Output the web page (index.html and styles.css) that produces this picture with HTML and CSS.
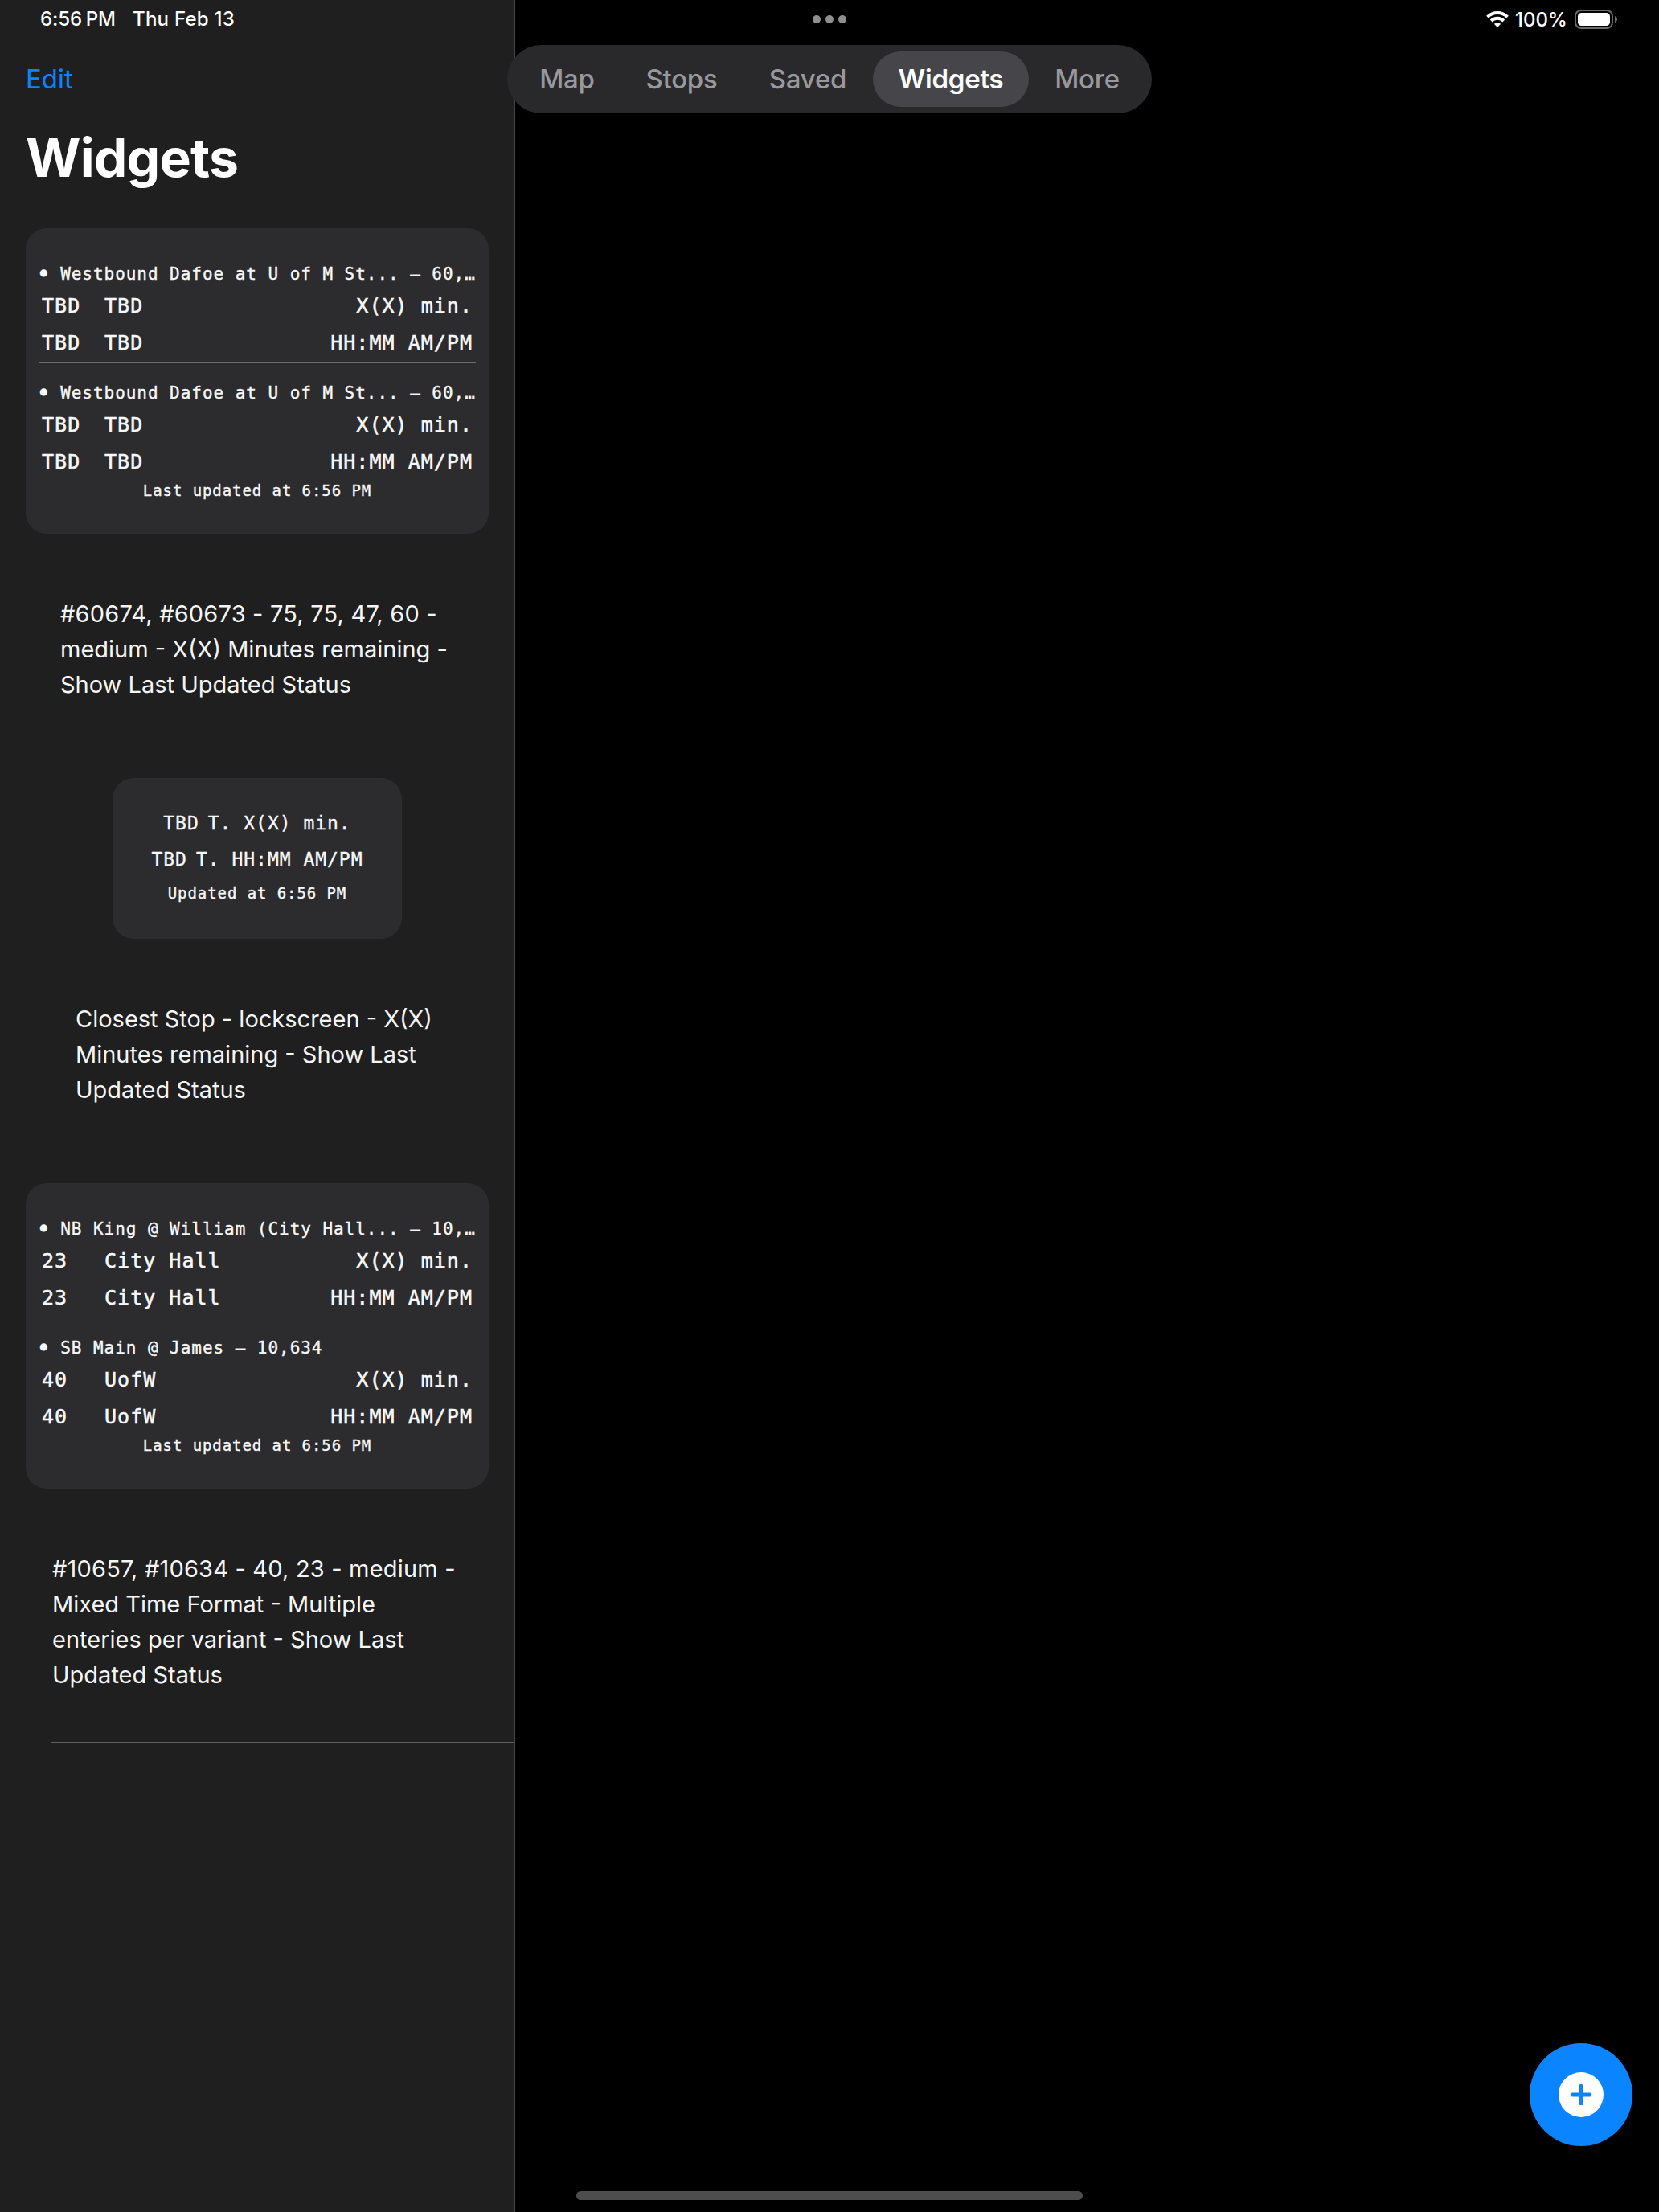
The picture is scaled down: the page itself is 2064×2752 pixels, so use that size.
FILE: index.html
```html
<!DOCTYPE html>
<html lang="en">
<head>
<meta charset="utf-8">
<title>Widgets</title>
<link rel="stylesheet" href="styles.css">
</head>
<body>
<div class="app">
  <aside class="sidebar">
    <div class="clock"><span class="time">6:56 PM</span><span class="date">Thu Feb 13</span></div>
    <div class="toolbar"><a class="edit">Edit</a></div>
    <h1 class="title">Widgets</h1>
    <ul class="list">
      <li class="item inset-a">
        <div class="card">
          <div class="stop"><b>•</b> Westbound Dafoe at U of M St... – 60,…</div>
          <div class="row"><span class="route">TBD</span><span class="dest">TBD</span><span class="eta">X(X) min.</span></div>
          <div class="row"><span class="route">TBD</span><span class="dest">TBD</span><span class="eta">HH:MM AM/PM</span></div>
          <div class="rule"></div>
          <div class="stop"><b>•</b> Westbound Dafoe at U of M St... – 60,…</div>
          <div class="row"><span class="route">TBD</span><span class="dest">TBD</span><span class="eta">X(X) min.</span></div>
          <div class="row"><span class="route">TBD</span><span class="dest">TBD</span><span class="eta">HH:MM AM/PM</span></div>
          <div class="updated">Last updated at 6:56 PM</div>
        </div>
        <p class="desc"><span class="ids">#60674, #60673 - 75, 75, 47, 60 -</span><br>medium - X(X) Minutes remaining -<br>Show Last Updated Status</p>
      </li>
      <li class="item inset-b">
        <div class="card small">
          <div class="line">TBD<span class="gap"></span>T. X(X) min.</div>
          <div class="line">TBD<span class="gap"></span>T. HH:MM AM/PM</div>
          <div class="updated">Updated at 6:56 PM</div>
        </div>
        <p class="desc">Closest Stop - lockscreen - X(X)<br>Minutes remaining - Show Last<br>Updated Status</p>
      </li>
      <li class="item inset-c">
        <div class="card">
          <div class="stop"><b>•</b> NB King @ William (City Hall... – 10,…</div>
          <div class="row"><span class="route">23</span><span class="dest">City Hall</span><span class="eta">X(X) min.</span></div>
          <div class="row"><span class="route">23</span><span class="dest">City Hall</span><span class="eta">HH:MM AM/PM</span></div>
          <div class="rule"></div>
          <div class="stop"><b>•</b> SB Main @ James – 10,634</div>
          <div class="row"><span class="route">40</span><span class="dest">UofW</span><span class="eta">X(X) min.</span></div>
          <div class="row"><span class="route">40</span><span class="dest">UofW</span><span class="eta">HH:MM AM/PM</span></div>
          <div class="updated">Last updated at 6:56 PM</div>
        </div>
        <p class="desc"><span class="ids">#10657, #10634 - 40, 23 - medium -</span><br>Mixed Time Format - Multiple<br>enteries per variant - Show Last<br>Updated Status</p>
      </li>
    </ul>
  </aside>
  <main class="detail">
    <div class="system">
      <svg class="wifi" width="28" height="20" viewBox="0 0 28 20">
        <g fill="none" stroke="#fff" stroke-width="3.9">
          <path d="M1.5 7.1a17.8 17.8 0 0 1 25 0"/>
          <path d="M6.2 12a11.1 11.1 0 0 1 15.6 0"/>
        </g>
        <path fill="#fff" d="M14 20l-4.1-4.2a5.9 5.9 0 0 1 8.2 0z"/>
      </svg>
      <span class="percent">100%</span>
      <svg class="battery" width="54" height="24" viewBox="0 0 54 24">
        <rect x="1" y="1" width="46" height="22" rx="7" fill="none" stroke="#6b6b6b" stroke-width="2"/>
        <rect x="4" y="4" width="40" height="16" rx="4.5" fill="#fff"/>
        <path d="M50 8c4 1.4 4 6.6 0 8z" fill="#6b6b6b"/>
      </svg>
    </div>
  </main>

  <div class="dots"><i></i><i></i><i></i></div>
  <nav class="tabs">
    <a class="tab map">Map</a>
    <a class="tab stops">Stops</a>
    <a class="tab saved">Saved</a>
    <a class="tab widgets active">Widgets</a>
    <a class="tab more">More</a>
  </nav>
  <button class="add" aria-label="Add widget">
    <svg width="56" height="56" viewBox="0 0 56 56">
      <circle cx="28" cy="28" r="28" fill="#fff"/>
      <path d="M28 17.2v21.6M17.2 28h21.6" stroke="#0a84ff" stroke-width="5" stroke-linecap="round"/>
    </svg>
  </button>
  <div class="home"></div>
</div>
</body>
</html>
```

FILE: styles.css
```css
* {
  box-sizing: border-box;
}

body {
  margin: 0;
  background: #000;
  color: #fff;
  font-family: Inter, "Liberation Sans", sans-serif;
}

.app {
  position: relative;
  display: grid;
  grid-template-columns: 641px 1fr;
  width: 2064px;
  height: 2752px;
  overflow: hidden;
}

.sidebar {
  background: #1f1f1f;
  border-right: 1px solid #464648;
}

/* Status bar */
.clock {
  display: flex;
  height: 48px;
  padding-left: 50px;
  font-size: 24px;
  font-weight: 500;
  line-height: 48px;
  white-space: nowrap;
}

.time {
  width: 115px;
  letter-spacing: -0.1px;
  word-spacing: -1.5px;
}

.date {
  letter-spacing: 0.25px;
}

.system {
  display: flex;
  align-items: center;
  justify-content: flex-end;
  height: 48px;
  padding-right: 51px;
}

.percent {
  width: 65px;
  margin: 0 9px 0 8px;
  font-size: 24px;
  font-weight: 500;
  line-height: 47px;
  white-space: nowrap;
}

/* Sidebar header */
.toolbar {
  height: 100px;
  padding-left: 32px;
  font-size: 33px;
  line-height: 100px;
}

.edit {
  color: #0a84ff;
}

.title {
  height: 104px;
  margin: 0;
  padding-left: 32px;
  font-size: 66px;
  font-weight: 700;
  line-height: 96px;
  letter-spacing: -0.8px;
}

/* Widget list */
.list {
  margin: 0;
  padding: 0;
  list-style: none;
}

.item {
  --inset: 74px;
  display: flex;
  flex-direction: column;
  align-items: center;
  padding-top: 32px;
}

.item:first-child {
  padding-top: 0;
}

.inset-b {
  --inset: 93px;
}

.inset-c {
  --inset: 64px;
}

.item::after,
.item:first-child::before {
  content: "";
  align-self: stretch;
  height: 1px;
  margin-left: var(--inset);
  background: #5f5f61;
}

.item:first-child::before {
  margin-bottom: 31px;
}

.card {
  width: 576px;
  height: 380px;
  padding: 42px 16px 0;
  border-radius: 26px;
  background: #2c2c2e;
  color: #f8f8f8;
  font-family: "DejaVu Sans Mono", monospace;
  white-space: nowrap;
  -webkit-text-stroke: 0.35px #f8f8f8;
}

.stop {
  height: 32px;
  font-size: 21px;
  line-height: 31px;
  letter-spacing: 0.95px;
}

.stop b {
  font-weight: 400;
  -webkit-text-stroke-width: 3px;
}

.row {
  display: flex;
  height: 46px;
  padding: 0 4px;
  font-size: 25px;
  line-height: 46px;
  letter-spacing: 1.02px;
  -webkit-text-stroke-width: 0.5px;
}

.route {
  width: 78px;
}

.eta {
  margin-left: auto;
}

.rule {
  height: 1px;
  margin: 0 0 23px;
  background: #6a6a6c;
}

.updated {
  font-size: 19px;
  line-height: 24px;
  letter-spacing: 0.92px;
  text-align: center;
}

.small {
  width: 360px;
  height: 200px;
  padding-top: 34px;
}

.line {
  height: 45px;
  font-size: 23px;
  line-height: 45px;
  letter-spacing: 0.98px;
  text-align: center;
}

.gap {
  display: inline-block;
  width: 11px;
}

.small .updated {
  margin-top: 7px;
}

.desc {
  align-self: stretch;
  margin: 78px 0 61px;
  padding-left: calc(var(--inset) + 1px);
  color: #f5f5f5;
  font-size: 29px;
  line-height: 44px;
  white-space: nowrap;
}

.ids {
  letter-spacing: 0.19px;
}

/* Floating controls */
.dots {
  position: absolute;
  top: 19px;
  left: 1011px;
  display: flex;
  gap: 6px;
}

.dots i {
  width: 10px;
  height: 10px;
  border-radius: 50%;
  background: #8e8e8e;
}

.tabs {
  position: absolute;
  top: 56px;
  left: 631px;
  display: flex;
  width: 802px;
  height: 85px;
  padding: 8px;
  border-radius: 43px;
  background: #29292c;
}

.tab {
  height: 69px;
  border-radius: 35px;
  color: #98989d;
  font-size: 33px;
  font-weight: 450;
  line-height: 68px;
  letter-spacing: -0.25px;
  text-align: center;
}

.map { width: 133px; }
.stops { width: 152px; }
.saved { width: 162px; }
.widgets { width: 194px; }
.more { width: 145px; }

.tab.active {
  background: #464549;
  color: #fff;
  font-weight: 600;
}

.add {
  position: absolute;
  right: 33px;
  bottom: 82px;
  display: flex;
  align-items: center;
  justify-content: center;
  width: 128px;
  height: 128px;
  padding: 0;
  border: 0;
  border-radius: 50%;
  background: #0a84ff;
}

.home {
  position: absolute;
  left: 717px;
  bottom: 15px;
  width: 630px;
  height: 11px;
  border-radius: 6px;
  background: #4d4d4d;
}
```
